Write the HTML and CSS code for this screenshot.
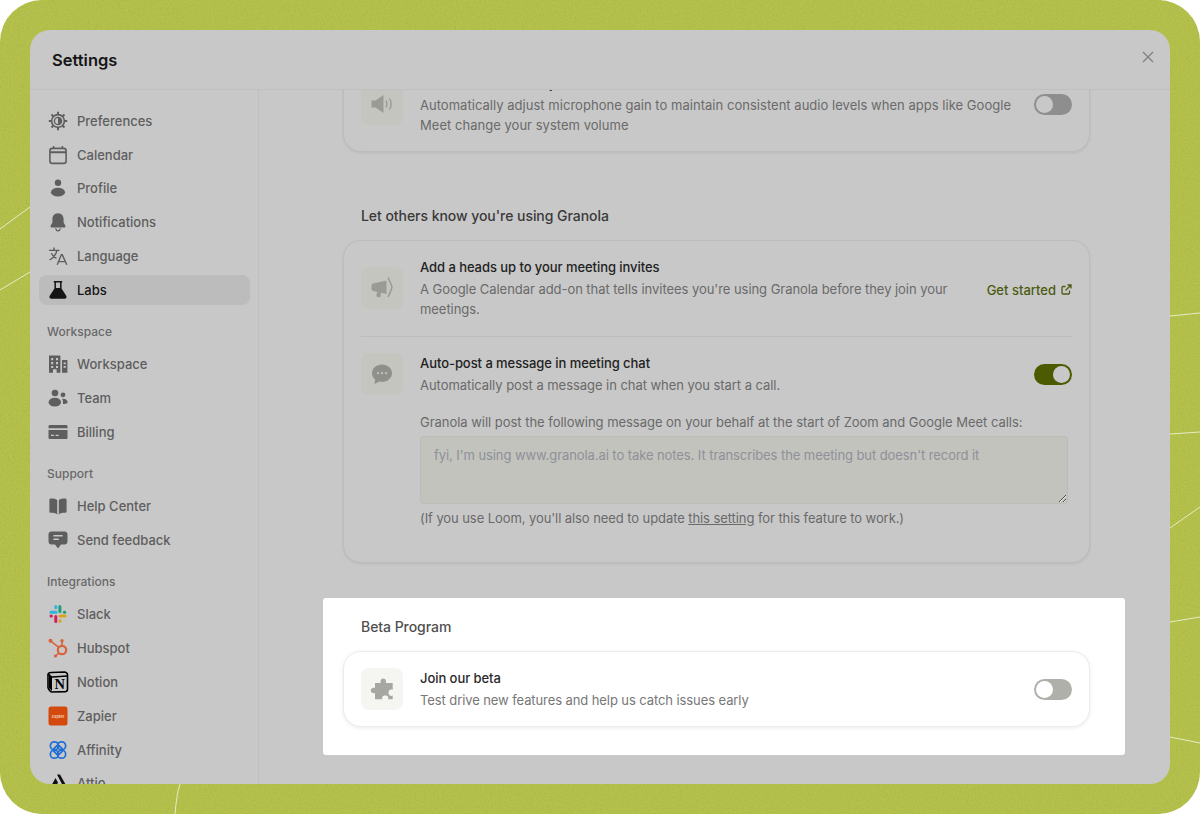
FILE: index.html
```html
<!DOCTYPE html>
<html>
	<head>
		<meta charset="UTF-8">
		<title>Settings</title>
		<link rel="stylesheet" href="styles.css">
	</head>
	<body>
		<div class="frame">
			<!-- noise and thin lines of the green wallpaper -->
			<svg class="wallpaper" width="1200" height="814" viewBox="0 0 1200 814">
				<filter id="grain" x="0" y="0" width="100%" height="100%">
					<feTurbulence type="fractalNoise" baseFrequency="0.6" numOctaves="2" seed="4"/>
					<feColorMatrix values="0 0 0 0 0.4  0 0 0 0 0.46  0 0 0 0 0.08  2.6 0 0 0 -1.05"/>
				</filter>
				<rect width="1200" height="814" filter="url(#grain)" opacity="0.75"/>
				<g stroke="#e6ebc4" stroke-width="1" fill="none">
					<path d="M0 229L30 207"/>
					<path d="M0 290L30 272"/>
					<path d="M1170 316L1200 313"/>
					<path d="M1170 434L1200 432"/>
					<path d="M1170 528L1200 507"/>
					<path d="M1170 622L1200 617"/>
					<path d="M1170 737L1200 743"/>
					<path d="M175 814C176 803 177 793 180 784"/>
				</g>
			</svg>

			<div class="modal">
				<div class="modalHead">
					<h1>Settings</h1>
					<svg class="closeIcon" width="12" height="12" viewBox="0 0 12 12"><path d="M1 1L11 11M11 1L1 11" stroke="#808080" stroke-width="1.3" fill="none"/></svg>
				</div>
				<div class="modalBody">
					<div class="sidebar">
						<div class="group">
							<a class="item">
								<svg class="icon" viewBox="0 0 20 20"><g stroke="#5e5e5e" fill="none"><circle cx="10" cy="10" r="6.4" stroke-width="1.6"/><path stroke-width="2" d="M10 .8V3.4M10 16.6V19.2M.8 10H3.4M16.6 10H19.2M3.5 3.5L5.3 5.3M14.7 14.7L16.5 16.5M16.5 3.5L14.7 5.3M5.3 14.7L3.5 16.5"/><circle cx="10" cy="10" r="3.6" stroke-width="1.4"/></g><path fill="#5e5e5e" d="M10 6.4A3.6 3.6 0 0 1 10 13.6Z"/></svg>
								Preferences
							</a>
							<a class="item">
								<svg class="icon" viewBox="0 0 20 20"><rect x="1.9" y="3.4" width="16.2" height="15" rx="2.4" fill="none" stroke="#5e5e5e" stroke-width="1.6"/><path d="M2 7.2H18" stroke="#5e5e5e" stroke-width="2"/><path d="M5.6 1V4M14.4 1V4" stroke="#5e5e5e" stroke-width="1.5"/></svg>
								Calendar
							</a>
							<a class="item">
								<svg class="icon" viewBox="0 0 20 20"><circle cx="10" cy="4.8" r="3.2" fill="#5e5e5e"/><ellipse cx="10" cy="14.2" rx="7" ry="4.4" fill="#5e5e5e"/></svg>
								Profile
							</a>
							<a class="item">
								<svg class="icon" viewBox="0 0 20 20"><path fill="#5e5e5e" d="M10 1.2C6.2 1.2 4.4 4 4.4 7.2V10.6L2.6 13.8C2.2 14.6 2.6 15.4 3.6 15.4H16.4C17.4 15.4 17.8 14.6 17.4 13.8L15.6 10.6V7.2C15.6 4 13.8 1.2 10 1.2Z"/><path d="M7.6 16.4C8 18 9 18.8 10 18.8S12 18 12.4 16.4" fill="none" stroke="#5e5e5e" stroke-width="1.3"/></svg>
								Notifications
							</a>
							<a class="item">
								<svg class="icon" viewBox="0 0 20 20"><path fill="none" stroke="#5e5e5e" stroke-width="1.4" d="M1 4.4H11.4M6 1.4V4.4M9 4.4C8 8.6 5.4 12 1.6 14M3.4 7.2C4.6 9.6 6.2 11.2 8.4 12.4M9.2 18.8L13.4 8.6H14.2L18.8 18.8M10.8 15.6H17.2"/></svg>
								Language
							</a>
							<a class="item active">
								<svg class="icon" viewBox="0 0 20 20"><path d="M5.8 1.7H14.2M7.2 1.7V8.6M12.8 1.7V8.6" stroke="#141414" stroke-width="1.5" fill="none"/><path fill="#141414" d="M6.8 8H13.2L18.2 15.8C19.2 17.4 18.2 18.8 16.6 18.8H3.4C1.8 18.8 .8 17.4 1.8 15.8Z"/></svg>
								Labs
							</a>
						</div>

						<div class="group">
							<div class="groupLabel">Workspace</div>
							<a class="item">
								<svg class="icon" viewBox="0 0 20 20"><path fill="#5e5e5e" fill-rule="evenodd" d="M1 1.4H12.4V18.8H8.6V15.2H5V18.8H1ZM3.2 4V6.2H5.2V4ZM3.2 8V10.2H5.2V8ZM3.2 12V14H5.2V12ZM8 4V6.2H10V4ZM8 8V10.2H10V8ZM8 12V14H10V12Z"/><path fill="#5e5e5e" fill-rule="evenodd" d="M14 6H19.4V18.8H14ZM15.6 8.4V10.2H17.8V8.4ZM15.6 12V13.8H17.8V12Z"/></svg>
								Workspace
							</a>
							<a class="item">
								<svg class="icon" viewBox="0 0 20 20"><circle cx="7" cy="5" r="3.3" fill="#5e5e5e"/><circle cx="15" cy="6.8" r="2.4" fill="#5e5e5e"/><ellipse cx="6.8" cy="14.2" rx="6.2" ry="4.4" fill="#5e5e5e"/><path fill="#5e5e5e" d="M14 10.8C17 10.4 19.6 11.8 19.6 14C19.6 15.4 17.8 16 15 16C15.2 14 15 12.2 14 10.8Z"/></svg>
								Team
							</a>
							<a class="item">
								<svg class="icon" viewBox="0 0 20 20"><path fill="#5e5e5e" fill-rule="evenodd" d="M2 3H18C19 3 19.5 3.5 19.5 4.5V6.2H.5V4.5C.5 3.5 1 3 2 3ZM.5 8H19.5V15.5C19.5 16.5 19 17 18 17H2C1 17 .5 16.5 .5 15.5ZM3 12.8V14H6V12.8ZM7.6 12.8V14H10.6V12.8Z"/></svg>
								Billing
							</a>
						</div>

						<div class="group">
							<div class="groupLabel">Support</div>
							<a class="item">
								<svg class="icon" viewBox="0 0 20 20"><path fill="#5e5e5e" d="M1.4 3.8C1.4 3 2 2.4 2.8 2.4C5.4 2.4 7.6 2.8 9.2 4V18.4C7.6 17.2 5.2 16.8 2.8 16.8C2 16.8 1.4 16.2 1.4 15.4ZM18.6 3.8C18.6 3 18 2.4 17.2 2.4C14.6 2.4 12.4 2.8 10.8 4V18.4C12.4 17.2 14.8 16.8 17.2 16.8C18 16.8 18.6 16.2 18.6 15.4Z"/></svg>
								Help Center
							</a>
							<a class="item">
								<svg class="icon" viewBox="0 0 20 20"><path fill="#5e5e5e" fill-rule="evenodd" d="M3.5 1.6H16.5C18.3 1.6 19.5 2.8 19.5 4.6V11.4C19.5 13.2 18.3 14.4 16.5 14.4H13L10 18.6L7 14.4H3.5C1.7 14.4 .5 13.2 .5 11.4V4.6C.5 2.8 1.7 1.6 3.5 1.6ZM5.4 5V6.5H14.6V5ZM5.4 8.4V9.9H10.8V8.4Z"/></svg>
								Send feedback
							</a>
						</div>

						<div class="group">
							<div class="groupLabel">Integrations</div>
							<a class="item">
								<svg class="icon" viewBox="0 0 20 20">
									<path d="M3 8.2H8" stroke="#2fb5dc" stroke-width="3" stroke-linecap="round"/><path d="M7.8 2.5V3.8" stroke="#2fb5dc" stroke-width="3" stroke-linecap="round"/>
									<path d="M11.9 2.5V7.6" stroke="#1f9e78" stroke-width="3" stroke-linecap="round"/><path d="M16.7 8.2H16.4" stroke="#1f9e78" stroke-width="3" stroke-linecap="round"/>
									<path d="M12 12H17" stroke="#d9a320" stroke-width="3" stroke-linecap="round"/><path d="M12 17.2V16.8" stroke="#d9a320" stroke-width="3" stroke-linecap="round"/>
									<path d="M7.8 12.5V17.5" stroke="#cf1f5c" stroke-width="3" stroke-linecap="round"/><path d="M3 12H3.4" stroke="#cf1f5c" stroke-width="3" stroke-linecap="round"/>
								</svg>
								Slack
							</a>
							<a class="item">
								<svg class="icon" viewBox="0 0 20 20"><g stroke="#d8623c" fill="none"><circle cx="14" cy="12" r="4.2" stroke-width="2.2"/><path stroke-width="1.6" d="M14 7.6V3.4M10.8 9.4L2.8 3.2M10.8 15.2L7.6 18"/></g><g fill="#d8623c"><circle cx="14" cy="2.8" r="1.7"/><circle cx="2.5" cy="2.8" r="2"/><circle cx="7.4" cy="18" r="1.6"/></g></svg>
								Hubspot
							</a>
							<a class="item">
								<svg class="icon iconLarge" viewBox="0 0 22 22"><path d="M4.5 1.5L17.5 1C18.8 1 20.5 2.5 20.5 3.5V18C20.5 19.5 20 20.5 18.5 20.6L5 21C4 21 3.5 20.5 3 20L1.5 17.8C1.2 17.3 1 17 1 16.5V3.5C1 2.5 2.5 1.6 4.5 1.5Z" fill="#c8c8c8" stroke="#000" stroke-width="1.6"/><path d="M1.5 3C3 5.5 4 6 5.5 6L20 5" stroke="#000" stroke-width="1.6" fill="none"/><path d="M2 4.5L5 6V20L2 17Z" fill="#000"/><text x="12.8" y="18" text-anchor="middle" font-family="Liberation Serif, serif" font-weight="700" font-size="14.5" fill="#000">N</text></svg>
								Notion
							</a>
							<a class="item">
								<svg class="icon" viewBox="0 0 20 20"><rect x=".5" y=".5" width="19" height="19" rx="2.5" fill="#d34a0c"/><text x="10" y="11.6" text-anchor="middle" font-family="Inter, sans-serif" font-weight="700" font-size="4.2" fill="#f3c5ae">zapier</text></svg>
								Zapier
							</a>
							<a class="item">
								<svg class="icon" viewBox="0 0 20 20"><g fill="none" stroke="#1f6fd6" stroke-width="1.7"><rect x="2.4" y="1.8" width="8" height="8" rx="3.8"/><rect x="9.6" y="1.8" width="8" height="8" rx="3.8"/><rect x="2.4" y="10.2" width="8" height="8" rx="3.8"/><rect x="9.6" y="10.2" width="8" height="8" rx="3.8"/><rect x="6.2" y="6.2" width="7.6" height="7.6" rx="1.5" transform="rotate(45 10 10)"/></g></svg>
								Affinity
							</a>
							<a class="item">
								<svg class="icon" viewBox="0 0 20 20"><path fill="#111" d="M9 1.5H12L19 14H15.5ZM7.5 5L10 9.5L5.5 18H2.5L1.5 16Z"/></svg>
								Attio
							</a>
						</div>
					</div>

					<div class="main">
						<div class="mainInner">
							<div class="card">
								<div class="row">
									<div class="iconBox">
										<svg width="24" height="24" viewBox="0 0 24 24"><path fill="#9b9b96" d="M1.5 8.5H5.5L13.5 3V21L5.5 15.5H1.5Z"/><path d="M16 8.5C17 10.5 17 13.5 16 15.5M19.5 6.5C21.5 9.8 21.5 14.2 19.5 17.5" stroke="#9b9b96" stroke-width="1.4" fill="none"/></svg>
									</div>
									<div class="text">
										<div class="title">Automatic volume adjustment</div>
										<div class="desc longLine">Automatically adjust microphone gain to maintain consistent audio levels when apps like Google Meet change your system volume</div>
									</div>
									<div class="toggle dim"><span class="knob"></span></div>
								</div>
							</div>

							<div class="section">
								<h2>Let others know you're using Granola</h2>
								<div class="card">
									<div class="row">
										<div class="iconBox">
											<svg width="24" height="24" viewBox="0 0 24 24"><path fill="#9b9b96" d="M1.5 10C1.5 8.5 2.5 7.5 4 7.3L16.5 4.5V18L11 16.8L10.5 20.5C10.3 21.3 9.5 21.5 8.8 21.3L7 20.6C6.3 20.3 6.2 19.8 6.4 19.2L7.2 15.8L4 15.2C2.5 15 1.5 14 1.5 12.5Z"/><path d="M18.2 1.5C19.5 5 21.5 8.5 22 11.2C21.5 14 19.5 17.5 18.2 21" stroke="#9b9b96" stroke-width="1.5" fill="none"/></svg>
										</div>
										<div class="text">
											<div class="title">Add a heads up to your meeting invites</div>
											<div class="desc">A Google Calendar add-on that tells invitees you're using Granola before they join your meetings.</div>
										</div>
										<a class="getStarted">
											Get started
											<svg width="11" height="11" viewBox="0 0 11 11"><path d="M8.5 6.5V9C8.5 9.6 8 10 7.5 10H2C1.4 10 1 9.6 1 9V3.5C1 3 1.4 2.5 2 2.5H4.5M4.5 6.5L9.5 1.5M6.5 1H10V4.5" fill="none" stroke="#4c5a10" stroke-width="1.3"/></svg>
										</a>
									</div>
									<div class="divider"></div>
									<div class="row rowTop">
										<div class="iconBox">
											<svg width="24" height="24" viewBox="0 0 24 24"><path fill="#8f8f8b" d="M12 2.5C17.5 2.5 22 6.3 22 11.2C22 16 17.5 19.8 12 19.8C11 19.8 10 19.7 9 19.4L5.5 21.6C5 21.9 4.5 21.5 4.6 21L5.2 17.4C3.2 15.8 2 13.6 2 11.2C2 6.3 6.5 2.5 12 2.5Z"/><g fill="#c4c5bf"><circle cx="8" cy="11.2" r="1.1"/><circle cx="12" cy="11.2" r="1.1"/><circle cx="16" cy="11.2" r="1.1"/></g></svg>
										</div>
										<div class="text">
											<div class="title">Auto-post a message in meeting chat</div>
											<div class="desc">Automatically post a message in chat when you start a call.</div>
										</div>
										<div class="toggle on"><span class="knob"></span></div>
									</div>
									<div class="extra">
										<div class="desc">Granola will post the following message on your behalf at the start of Zoom and Google Meet calls:</div>
										<textarea class="message" placeholder="fyi, I'm using www.granola.ai to take notes. It transcribes the meeting but doesn't record it"></textarea>
										<div class="desc note">(If you use Loom, you'll also need to update <span class="link">this setting</span> for this feature to work.)</div>
									</div>
								</div>
							</div>

							<!-- highlighted part of the page, the rest is dimmed -->
							<div class="section beta">
								<h2>Beta Program</h2>
								<div class="card">
									<div class="row">
										<div class="iconBox">
											<svg width="24" height="24" viewBox="0 0 24 24"><path fill="#a5a7a0" d="M5 6H10.8C10.2 4.6 10.6 1.6 13.3 1.6C16 1.6 16.4 4.6 15.8 6H22.7V13C21 12 18.5 13 18.5 15.8C18.5 18.5 21 19.5 22.7 18.6V22.3H18C19 20.5 18 18.5 15.3 18.5C12.5 18.5 11.5 20.5 12.5 22.3H5V16C3.5 16.8 .8 16 .8 13.5C.8 11 3.5 10.2 5 11Z"/></svg>
										</div>
										<div class="text">
											<div class="title">Join our beta</div>
											<div class="desc">Test drive new features and help us catch issues early</div>
										</div>
										<div class="toggle"><span class="knob"></span></div>
									</div>
								</div>
							</div>
						</div>
					</div>
				</div>
			</div>
		</div>
	</body>
</html>
```

FILE: styles.css
```css
*{
	margin: 0;
	padding: 0;
	box-sizing: border-box;
}
html,body{
	background: #fff;
	overflow: hidden;
}
body{
	font-family: Inter, "Liberation Sans", sans-serif;
	font-size: 13px;
	line-height: 20px;
}
.frame{
	width: 1200px;
	height: 814px;
	padding: 30px;
	background: #b5c24a;
	border-radius: 42px;
	position: relative;
	overflow: hidden;
}
.wallpaper{
	position: absolute;
	left: 0;
	top: 0;
}
.modal{
	width: 1140px;
	height: 754px;
	background: #c8c8c8;
	border-radius: 20px;
	display: flex;
	flex-direction: column;
	position: relative;
	overflow: hidden;
}
.modalHead{
	height: 60px;
	flex: none;
	padding: 0 16px 0 22px;
	border-bottom: 1px solid #bfbfbf;
	display: flex;
	align-items: center;
	justify-content: space-between;
}
.modalHead h1{
	font-size: 16.5px;
	font-weight: 600;
	color: #161616;
}
.closeIcon{
	margin-top: -6px;
}
.modalBody{
	flex: 1;
	min-height: 0;
	display: flex;
}

/* left menu */
.sidebar{
	width: 229px;
	flex: none;
	padding: 16px 8px 0 9px;
	border-right: 1px solid #bfbfbf;
	overflow: hidden;
}
.group{
	margin-bottom: 18px;
	display: flex;
	flex-direction: column;
	gap: 4px;
}
.groupLabel{
	padding-left: 8px;
	line-height: 18px;
	margin-bottom: 4.6px;
	font-size: 12px;
	font-weight: 500;
	color: #686868;
}
.item{
	height: 29.8px;
	flex: none;
	padding-left: 9px;
	border-radius: 8px;
	display: flex;
	align-items: center;
	gap: 9px;
	font-weight: 500;
	color: #5e5e5e;
}
.item.active{
	background: #bcbcbc;
	color: #161616;
}
.icon{
	width: 20px;
	height: 20px;
	flex: none;
}
.icon.iconLarge{
	width: 22px;
	height: 22px;
	margin: 0 -1px;
}

/* right part */
.main{
	flex: 1;
	min-width: 0;
	overflow: hidden;
}
.mainInner{
	width: 747px;
	margin: -34px 0 0 84px;
}
.card{
	border: 1px solid #bcbcbc;
	border-radius: 18px;
	padding: 16px 17px;
	background: #c8c8c8;
	box-shadow: 0 1px 3px rgba(0,0,0,0.08);
}
.row{
	display: flex;
	align-items: center;
	gap: 17px;
}
.rowTop{
	align-items: flex-start;
}
.iconBox{
	width: 42px;
	height: 42px;
	flex: none;
	border-radius: 8px;
	background: #c4c5bf;
	display: flex;
	align-items: center;
	justify-content: center;
}
.text{
	flex: 1;
	min-width: 0;
}
.title{
	font-weight: 500;
	letter-spacing: -0.06px;
	color: #222;
	margin-bottom: 2px;
}
.desc{
	letter-spacing: -0.05px;
	color: #6a6a6a;
}
.desc.longLine{
	letter-spacing: 0.03px;
}
.extra{
	margin-top: 17px;
	padding: 0 0 18px 59px;
}
.extra .desc{
	letter-spacing: -0.03px;
}
.extra .desc.note{
	letter-spacing: -0.08px;
}
.toggle{
	width: 38px;
	height: 21px;
	flex: none;
	padding: 2px;
	border-radius: 11px;
	background: #b0b0aa;
	display: flex;
}
.toggle.dim{
	background: #8e8e8e;
}
.toggle.dim .knob{
	background: #c8c8c8;
}
.toggle.on{
	background: #4c5a00;
	justify-content: flex-end;
	margin-top: 11px;
}
.toggle.on .knob{
	background: #c8c8c8;
}
.knob{
	width: 17px;
	height: 17px;
	border-radius: 50%;
	background: #fff;
}
.getStarted{
	flex: none;
	padding-top: 3px;
	display: flex;
	align-items: center;
	gap: 5px;
	font-weight: 500;
	color: #4c5a10;
}
.divider{
	height: 1px;
	margin: 17px 0 16px;
	background: #bcbcbc;
}
.message{
	display: block;
	width: 648px;
	height: 68px;
	padding: 8px 13px;
	margin: 4px 0;
	border: 1px solid #bcbdb4;
	border-radius: 4px;
	background: #c2c3bc;
	font: inherit;
	color: #6a6a6a;
	resize: vertical;
	outline: none;
}
.message::placeholder{
	color: #8e909a;
	letter-spacing: -0.08px;
	opacity: 1;
}
.link{
	text-decoration: underline;
}
.section{
	margin-top: 54px;
}
.section h2{
	padding-left: 18px;
	margin-bottom: 14px;
	font-size: 14px;
	font-weight: 500;
	letter-spacing: -0.05px;
	color: #3a3a3a;
}

/* highlight box */
.beta{
	margin: 35px -35px 0 -20px;
	padding: 19px 35px 28px 20px;
	background: #fff;
	border-radius: 3px;
}
.beta h2{
	color: #505050;
}
.beta .card{
	background: #fff;
	border-color: #ececec;
	box-shadow: 0 1px 4px rgba(0,0,0,0.08);
}
.beta .iconBox{
	background: #f5f6f1;
}
.beta .desc{
	letter-spacing: -0.09px;
	color: #777;
}
.beta .title{
	color: #2a2a2a;
}
```
